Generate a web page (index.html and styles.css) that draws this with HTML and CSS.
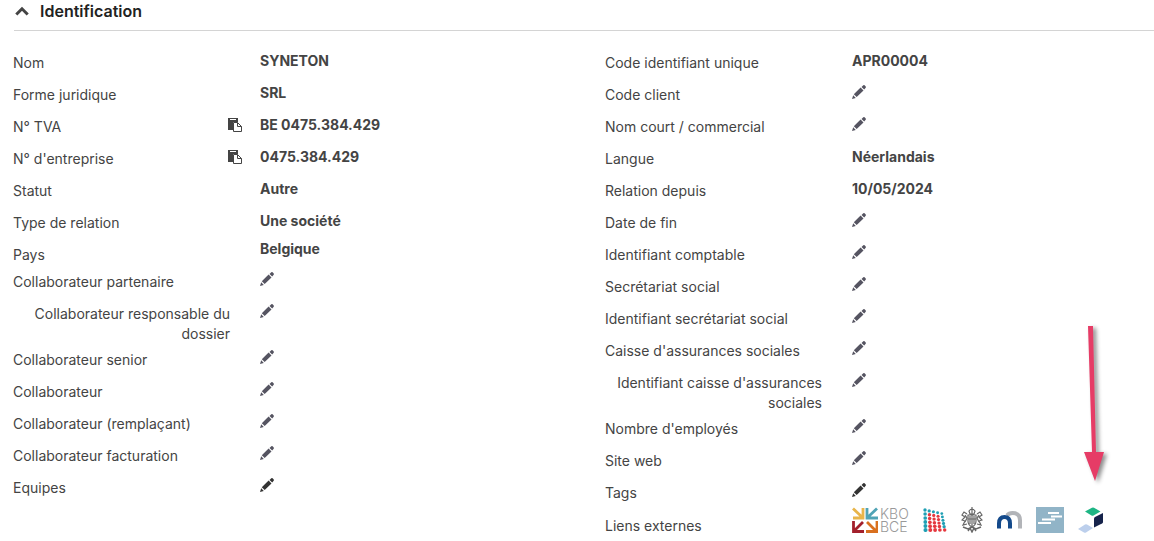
FILE: index.html
```html
<!DOCTYPE html>
<html lang="fr">

<head>
    <meta charset="UTF-8" />
    <title>Identification</title>
    <link rel="stylesheet" href="styles.css">
</head>

<body>
    <svg class="sprite" aria-hidden="true">
        <symbol id="pencil" viewBox="0 0 14 14">
            <path d="M1.8 9.2 8.600 2.600l2.900 2.900-6.800 6.600zM9.500 1.900 11.300.300q.700-.500 1.300 0l1.100 1.100q.500.600 0 1.300L12.200 4.600zM1.200 10.200l2.600 2.700L0 14z" />
        </symbol>
        <symbol id="copy" viewBox="0 0 14 14">
            <path d="M0 0h10v4H5v8H0z" />
            <path d="M2 1.5h6" stroke="#fff" />
            <path d="M5.500 4.500h4l4 4v5h-8z" fill="#fff" stroke="currentColor" />
            <path d="M9.500 4.500v4h4" fill="none" stroke="currentColor" />
        </symbol>
    </svg>

    <section class="panel">
        <h2 class="panel-title">
            <button type="button" class="toggle" aria-expanded="true">
                <svg width="14" height="10" viewBox="0 0 14 10"><path d="M1.300 8.500 7 2.800 12.700 8.500" /></svg>
                Identification
            </button>
        </h2>

        <div class="columns">
            <dl class="fields">
                <div class="field"><dt>Nom</dt><dd>SYNETON</dd></div>
                <div class="field"><dt>Forme juridique</dt><dd>SRL</dd></div>
                <div class="field">
                    <dt>N° TVA</dt>
                    <dd><button type="button" class="icon copy" aria-label="Copier"><svg><use href="#copy" /></svg></button>BE 0475.384.429</dd>
                </div>
                <div class="field">
                    <dt>N° d'entreprise</dt>
                    <dd><button type="button" class="icon copy" aria-label="Copier"><svg><use href="#copy" /></svg></button>0475.384.429</dd>
                </div>
                <div class="field"><dt>Statut</dt><dd>Autre</dd></div>
                <div class="field"><dt>Type de relation</dt><dd>Une société</dd></div>
                <div class="field compact"><dt>Pays</dt><dd>Belgique</dd></div>
                <div class="field"><dt>Collaborateur partenaire</dt><dd><button type="button" class="icon" aria-label="Modifier"><svg><use href="#pencil" /></svg></button></dd></div>
                <div class="field"><dt>Collaborateur responsable du dossier</dt><dd><button type="button" class="icon" aria-label="Modifier"><svg><use href="#pencil" /></svg></button></dd></div>
                <div class="field"><dt>Collaborateur senior</dt><dd><button type="button" class="icon" aria-label="Modifier"><svg><use href="#pencil" /></svg></button></dd></div>
                <div class="field"><dt>Collaborateur</dt><dd><button type="button" class="icon" aria-label="Modifier"><svg><use href="#pencil" /></svg></button></dd></div>
                <div class="field"><dt>Collaborateur (remplaçant)</dt><dd><button type="button" class="icon" aria-label="Modifier"><svg><use href="#pencil" /></svg></button></dd></div>
                <div class="field"><dt>Collaborateur facturation</dt><dd><button type="button" class="icon" aria-label="Modifier"><svg><use href="#pencil" /></svg></button></dd></div>
                <div class="field"><dt>Equipes</dt><dd><button type="button" class="icon dark" aria-label="Modifier"><svg><use href="#pencil" /></svg></button></dd></div>
            </dl>

            <dl class="fields">
                <div class="field"><dt>Code identifiant unique</dt><dd>APR00004</dd></div>
                <div class="field"><dt>Code client</dt><dd><button type="button" class="icon" aria-label="Modifier"><svg><use href="#pencil" /></svg></button></dd></div>
                <div class="field"><dt>Nom court / commercial</dt><dd><button type="button" class="icon" aria-label="Modifier"><svg><use href="#pencil" /></svg></button></dd></div>
                <div class="field"><dt>Langue</dt><dd>Néerlandais</dd></div>
                <div class="field"><dt>Relation depuis</dt><dd>10/05/2024</dd></div>
                <div class="field"><dt>Date de fin</dt><dd><button type="button" class="icon" aria-label="Modifier"><svg><use href="#pencil" /></svg></button></dd></div>
                <div class="field"><dt>Identifiant comptable</dt><dd><button type="button" class="icon" aria-label="Modifier"><svg><use href="#pencil" /></svg></button></dd></div>
                <div class="field"><dt>Secrétariat social</dt><dd><button type="button" class="icon" aria-label="Modifier"><svg><use href="#pencil" /></svg></button></dd></div>
                <div class="field"><dt>Identifiant secrétariat social</dt><dd><button type="button" class="icon" aria-label="Modifier"><svg><use href="#pencil" /></svg></button></dd></div>
                <div class="field"><dt>Caisse d'assurances sociales</dt><dd><button type="button" class="icon" aria-label="Modifier"><svg><use href="#pencil" /></svg></button></dd></div>
                <div class="field"><dt>Identifiant caisse d'assurances sociales</dt><dd><button type="button" class="icon" aria-label="Modifier"><svg><use href="#pencil" /></svg></button></dd></div>
                <div class="field"><dt>Nombre d'employés</dt><dd><button type="button" class="icon" aria-label="Modifier"><svg><use href="#pencil" /></svg></button></dd></div>
                <div class="field"><dt>Site web</dt><dd><button type="button" class="icon" aria-label="Modifier"><svg><use href="#pencil" /></svg></button></dd></div>
                <div class="field tags"><dt>Tags</dt><dd><button type="button" class="icon dark" aria-label="Modifier"><svg><use href="#pencil" /></svg></button></dd></div>
                <div class="field">
                    <dt>Liens externes</dt>
                    <dd class="links">
                        <a href="#" class="kbo">
                            <svg width="26" height="26" viewBox="0 0 26 26" fill="none" stroke-width="2.8">
                                <path d="M1 1.500 10 10M11 1v10H1" stroke="#e8b54a" />
                                <path d="M25 1.500 16 10M15 1v10h11" stroke="#4fa3b5" />
                                <path d="M11 15 2 24M1.500 14v10.500H12" stroke="#a3202c" />
                                <path d="M15 15l9 9M25 14v10.500H14" stroke="#d9701f" />
                            </svg>
                            <span>KBO<br>BCE</span>
                        </a>
                        <a href="#" aria-label="Banque nationale">
                            <svg id="dots" width="24" height="24" viewBox="0 0 24 24"></svg>
                        </a>
                        <a href="#" aria-label="Moniteur belge">
                            <svg width="22" height="26" viewBox="0 0 22 26" fill="none" stroke="#666" stroke-width="1.2">
                                <path d="M8 4q3-4 6 0l-1 3H9zM11 0v7M9 2.500h4M7 8h8v6q0 4-4 6-4-2-4-6zM9 9v8M11 8v11M13 9v8M7 12h8" />
                                <path d="M6 7 3 5 1 8l3 2-3 3 3 1-2 4 4-1M4 8l2 3-2 4M16 7l3-2 2 3-3 2 3 3-3 1 2 4-4-1M18 8l-2 3 2 4" />
                                <path d="M2 20l5 2 4-2 4 2 5-2M7 24l2-3 2 4 2-4 2 3" stroke-width="1.400" />
                            </svg>
                        </a>
                        <a href="#" aria-label="Notaire">
                            <svg width="25" height="18" viewBox="0 0 25 18" fill="none" stroke-width="4">
                                <path d="M10 4.500q2-2.500 5.500-2.500 7.500 0 7.500 7.300v8.200" stroke="#b2b4b8" />
                                <path d="M2 17.500v-5q0-6.500 5.500-6.500t5.500 6.500v5" stroke="#144a8b" />
                            </svg>
                        </a>
                        <a href="#" aria-label="Escaliers">
                            <svg width="28" height="26" viewBox="0 0 28 26">
                                <path d="M0 0h28v26H0z" fill="#91b4c7" />
                                <path d="M12 6h11M15 9.500h11M6 12.500h13M2 16h13" stroke="#fff" stroke-width="2" />
                            </svg>
                        </a>
                        <a href="#" aria-label="Syneton">
                            <svg width="26" height="26" viewBox="0 0 26 26">
                                <path d="M7 4.500 14 .700q1-.500 2 0L22.500 4.500l-7 4q-1 .500-2 0z" fill="#1db584" />
                                <path d="M25 6v9q0 1-1 1.500L16 20.500V11.500q0-1 1-1.500z" fill="#16234b" />
                                <path d="m0 22 7-4.500q1-.500 2 0l6 3.500-7 4.500q-1 .500-2 0z" fill="#bccfec" />
                            </svg>
                        </a>
                    </dd>
                </div>
            </dl>
        </div>
    </section>

    <svg class="pointer" width="34" height="166" viewBox="0 0 34 166" aria-hidden="true">
        <path d="M8 1h5l3 126h8l-9 29-11-29h8z" />
    </svg>

    <script>
        // slanted grid of dots, smaller towards the top right
        const dots = document.getElementById('dots');
        let circles = '';
        for (let row = 0; row < 6; row++) {
            for (let col = 0; col < 5; col++) {
                const x = 2 + col * (4.2 + row * 0.12) + row * 0.1;
                const y = 2 + col * 0.9 + row * (4 - col * 0.18);
                const r = 1.7 - col * 0.08 + row * 0.07;
                const red = row === 5 ? col > 0 : row > 0 && col > 0 && col < 4;
                circles += `<circle cx="${x}" cy="${y}" r="${r}" fill="${red ? '#e5383f' : '#1f9fb4'}" />`;
            }
        }
        dots.innerHTML = circles;
    </script>
</body>

</html>
```
FILE: styles.css
```css
* {
    box-sizing: border-box;
}

body {
    margin: 0;
    position: relative;
    background: #fff;
    color: #444;
    font-family: Inter, "Liberation Sans", sans-serif;
    font-size: 14px;
    line-height: 20px;
    overflow-x: hidden;
}

.sprite {
    display: none;
}

.panel-title {
    margin: 0 0 0 14px;
    height: 31px;
    border-bottom: 1px solid #d4d4d4;
}

.toggle {
    display: flex;
    align-items: center;
    gap: 11px;
    padding: 1px 0 0 1px;
    border: none;
    background: none;
    color: #222;
    font: 600 16px/20px Inter, "Liberation Sans", sans-serif;
    cursor: pointer;
}

.toggle svg {
    fill: none;
    stroke: #444;
    stroke-width: 3;
}

.columns {
    display: grid;
    grid-template-columns: 1fr 1fr;
    column-gap: 43px;
    padding: 19px 0 0 13px;
}

.fields {
    margin: 0;
}

.field {
    display: grid;
    grid-template-columns: 217px 1fr;
    column-gap: 30px;
    min-height: 32px;
}

/* only labels that wrap fill the column, so only those look right aligned */
dt {
    justify-self: start;
    padding: 3px 0;
    text-align: right;
}

dd {
    display: flex;
    align-items: flex-start;
    margin: 0;
    padding-top: 1px;
    font-weight: 700;
}

.compact {
    min-height: 27px;
}

.compact dd {
    line-height: 12px;
}

.tags {
    min-height: 33px;
}

.icon {
    display: flex;
    align-items: center;
    height: 18px;
    padding: 0;
    border: none;
    background: none;
    color: #555461;
    cursor: pointer;
}

.icon svg {
    width: 14px;
    height: 14px;
    fill: currentColor;
}

.icon.dark {
    color: #333;
}

.copy {
    height: 20px;
    margin: 0 18px 0 -32px;
    color: #444;
}

.links {
    align-items: center;
    gap: 14px;
    height: 26px;
    padding: 0;
    margin-top: -6px;
}

.links a {
    display: flex;
    align-items: center;
    gap: 2px;
}

.kbo {
    color: #999;
    font-size: 14px;
    font-weight: 300;
    line-height: 13px;
    text-decoration: none;
}

.pointer {
    position: absolute;
    top: 325px;
    right: 40px;
    fill: #e63c66;
    filter: drop-shadow(3px 2px 2px rgba(0, 0, 0, 0.45));
    pointer-events: none;
}
```
